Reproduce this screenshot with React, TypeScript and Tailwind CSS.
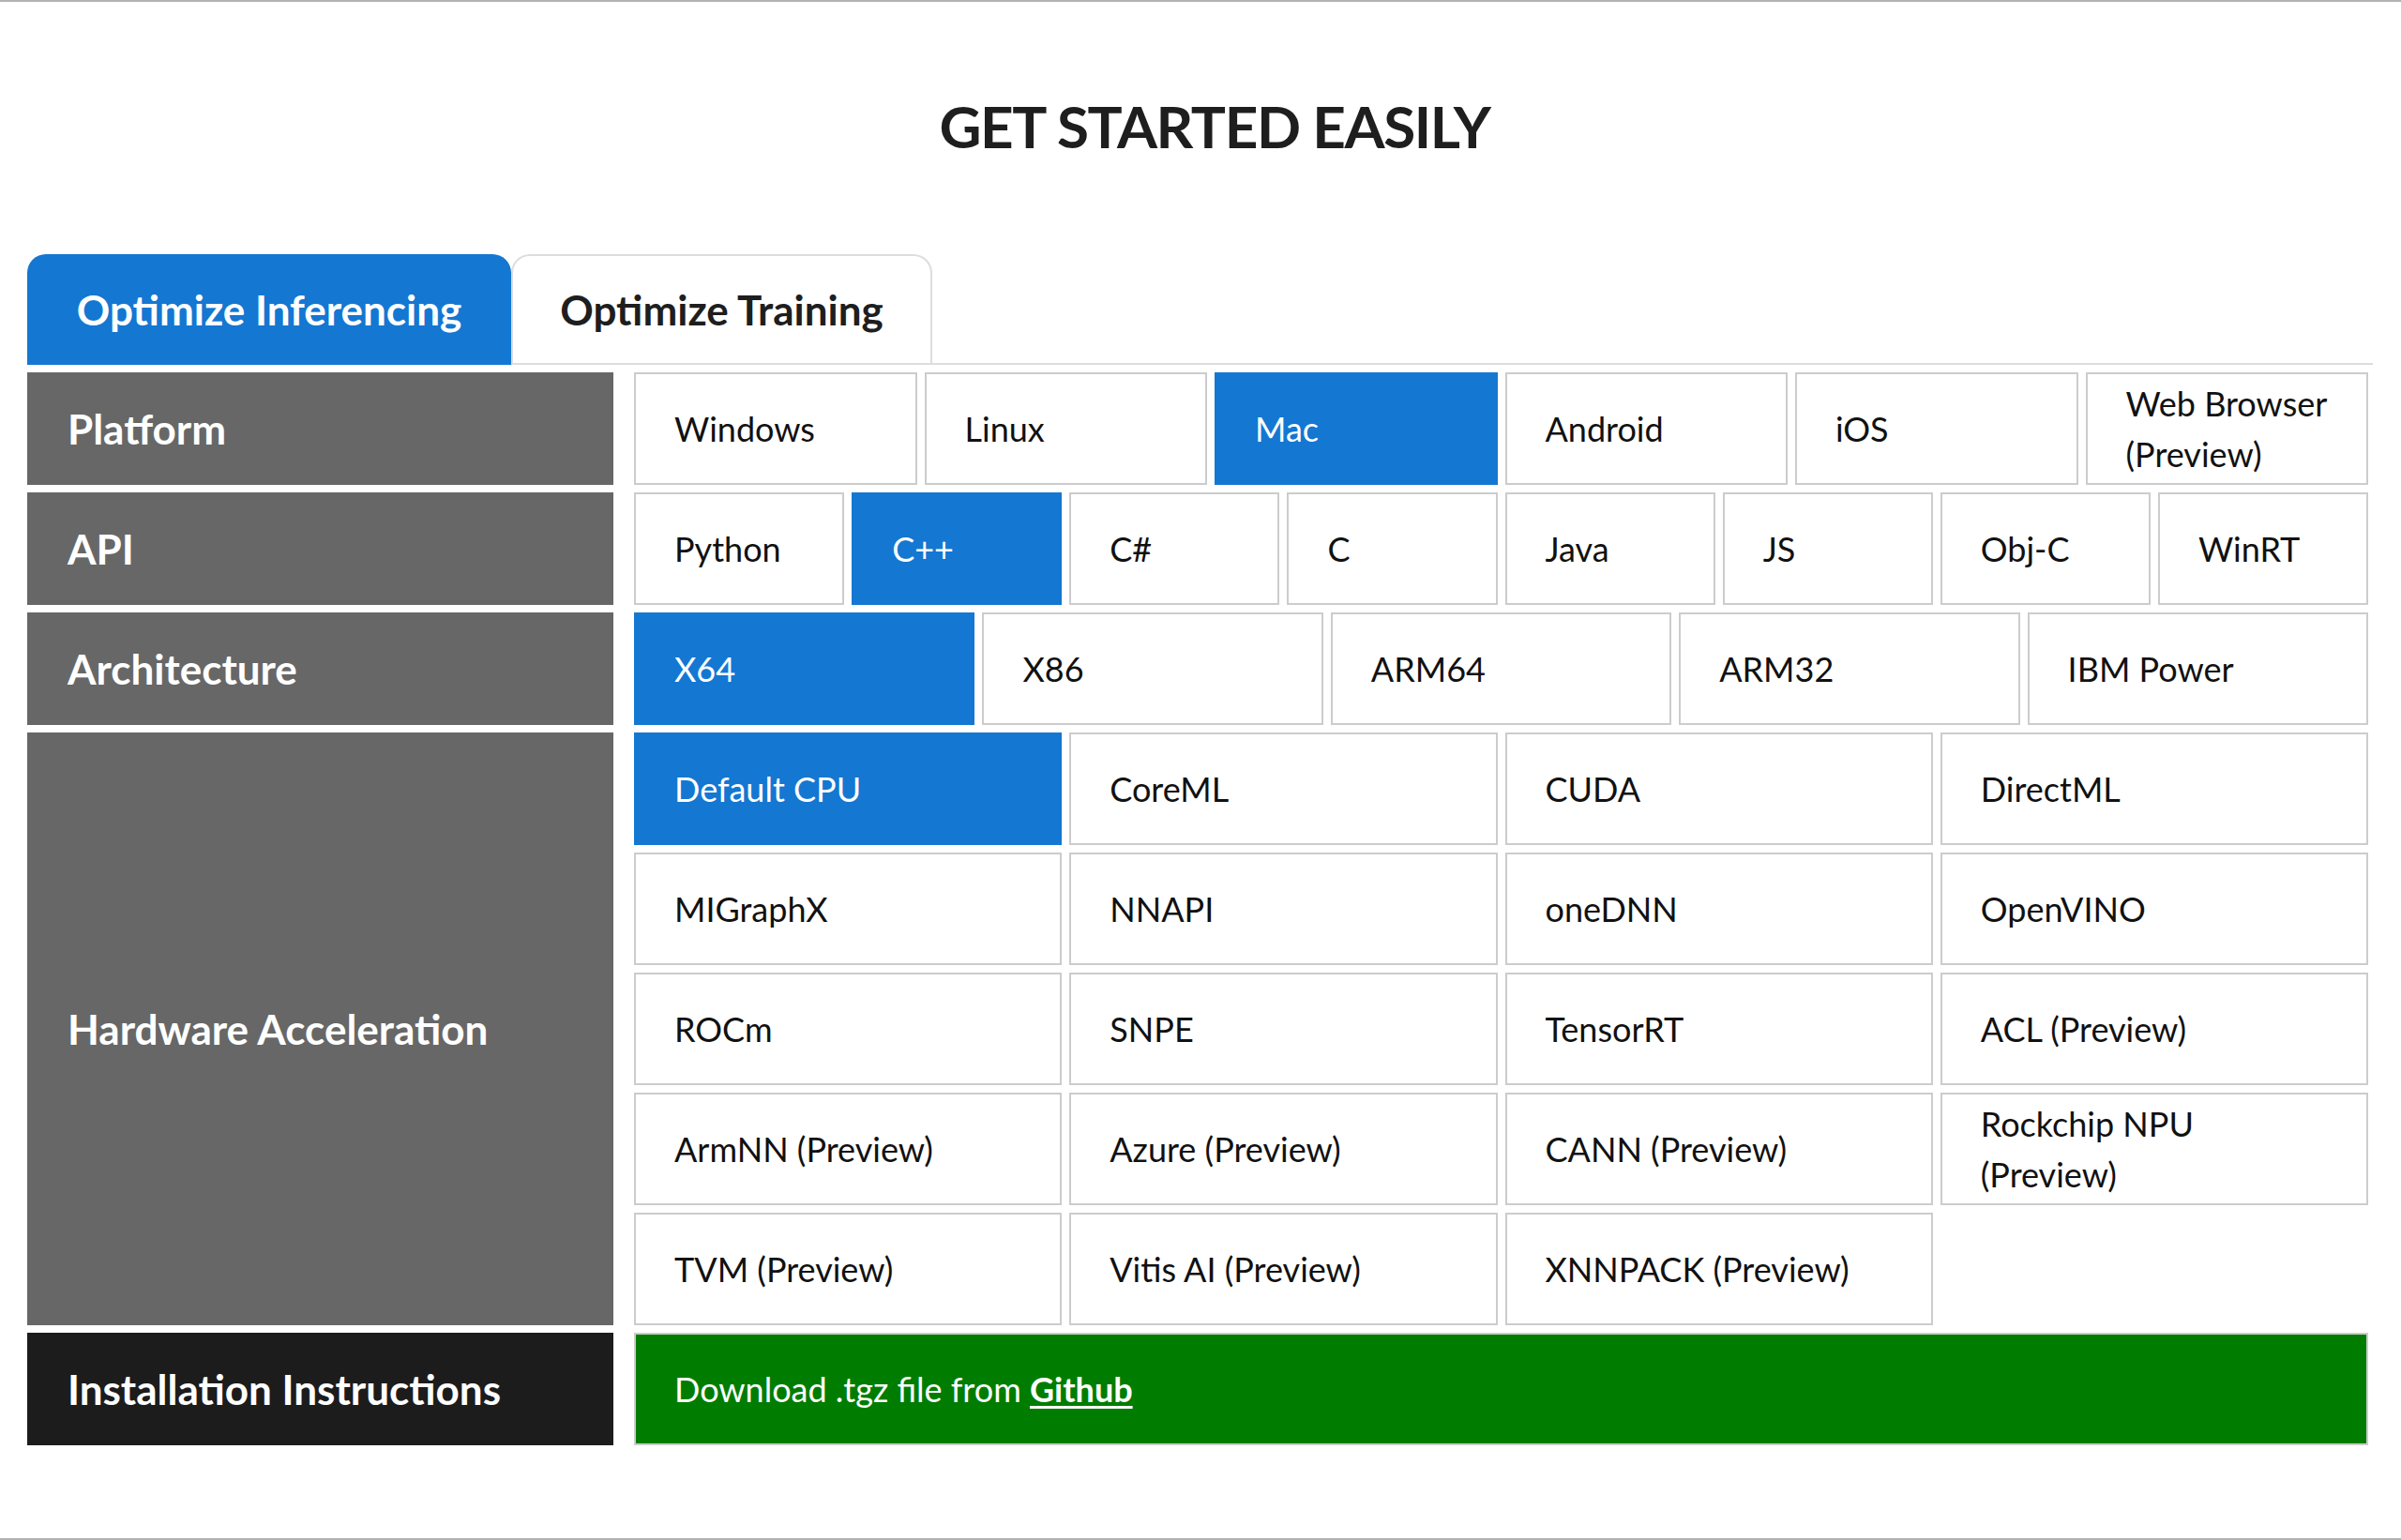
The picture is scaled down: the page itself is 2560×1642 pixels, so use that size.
import React from 'react';

type Opt = { label: string; active?: boolean };

const platforms: Opt[] = [
  { label: 'Windows' },
  { label: 'Linux' },
  { label: 'Mac', active: true },
  { label: 'Android' },
  { label: 'iOS' },
  { label: 'Web Browser\n(Preview)' },
];

const apis: Opt[] = [
  { label: 'Python' },
  { label: 'C++', active: true },
  { label: 'C#' },
  { label: 'C' },
  { label: 'Java' },
  { label: 'JS' },
  { label: 'Obj-C' },
  { label: 'WinRT' },
];

const archs: Opt[] = [
  { label: 'X64', active: true },
  { label: 'X86' },
  { label: 'ARM64' },
  { label: 'ARM32' },
  { label: 'IBM Power' },
];

const hardware: Opt[][] = [
  [{ label: 'Default CPU', active: true }, { label: 'CoreML' }, { label: 'CUDA' }, { label: 'DirectML' }],
  [{ label: 'MIGraphX' }, { label: 'NNAPI' }, { label: 'oneDNN' }, { label: 'OpenVINO' }],
  [{ label: 'ROCm' }, { label: 'SNPE' }, { label: 'TensorRT' }, { label: 'ACL (Preview)' }],
  [{ label: 'ArmNN (Preview)' }, { label: 'Azure (Preview)' }, { label: 'CANN (Preview)' }, { label: 'Rockchip NPU\n(Preview)' }],
  [{ label: 'TVM (Preview)' }, { label: 'Vitis AI (Preview)' }, { label: 'XNNPACK (Preview)' }],
];

function Cell({ opt }: { opt: Opt }) {
  return (
    <div
      className={cn(
        'h-[120px] border-2 pl-[41px] pr-4 flex items-center text-[36px] leading-[1.5] whitespace-pre-line',
        opt.active ? 'bg-[#1477d2] border-[#1477d2] text-white' : 'bg-white border-[#cccccc] text-[#111]'
      )}
    >
      {opt.label}
    </div>
  );
}

function Label({ children, className }: { children: React.ReactNode; className?: string }) {
  return (
    <div className={cn('w-[625px] shrink-0 flex items-center pl-[43px] text-[44px] font-bold text-white', className || 'bg-[#676767]')}>
      {children}
    </div>
  );
}

function OptRow({ items, cols }: { items: Opt[]; cols: string }) {
  return (
    <div className={cn('grid gap-[8px] w-[1849px]', cols)}>
      {items.map((o) => (
        <Cell key={o.label} opt={o} />
      ))}
    </div>
  );
}

export default function App() {
  return (
    <div className="h-[1642px] bg-white border-t-2 border-b-2 border-[#b3b3b3] font-['Lato','Liberation_Sans',sans-serif]">
      <h1 className="pt-[101px] pl-[30px] text-center text-[62px] leading-none font-bold tracking-[-1.4px] text-[#1e1e1e]">GET STARTED EASILY</h1>

      <div className="mt-[106px] mx-[29px] w-[2501px]">
        {/* Tabs */}
        <div className="flex border-b-2 border-[#dddddd]">
          <div className="w-[516px] h-[118px] -mb-[2px] rounded-t-[20px] bg-[#1477d2] flex items-center justify-center text-[44px] font-bold text-white">
            Optimize Inferencing
          </div>
          <div className="w-[449px] h-[116px] rounded-t-[20px] border-2 border-b-0 border-[#dddddd] flex items-center justify-center text-[44px] font-bold text-[#1e1e1e]">
            Optimize Training
          </div>
        </div>

        <div className="mt-[8px] flex flex-col gap-[8px]">
          <div className="flex gap-[22px] h-[120px]">
            <Label>Platform</Label>
            <OptRow items={platforms} cols="grid-cols-6" />
          </div>
          <div className="flex gap-[22px] h-[120px]">
            <Label>API</Label>
            <OptRow items={apis} cols="grid-cols-8" />
          </div>
          <div className="flex gap-[22px] h-[120px]">
            <Label>Architecture</Label>
            <OptRow items={archs} cols="grid-cols-5" />
          </div>
          <div className="flex gap-[22px]">
            <Label>Hardware Acceleration</Label>
            <div className="flex flex-col gap-[8px]">
              {hardware.map((row, i) => (
                <OptRow key={i} items={row} cols="grid-cols-4" />
              ))}
            </div>
          </div>
          <div className="flex gap-[22px] h-[120px]">
            <Label className="bg-[#1c1c1c]">Installation Instructions</Label>
            <div className="w-[1849px] border-2 border-[#cccccc] bg-[#007d00] pl-[41px] flex items-center text-[36px] text-white">
              Download .tgz file from&nbsp;<span className="font-bold underline underline-offset-4">Github</span>
            </div>
          </div>
        </div>
      </div>
    </div>
  );
}

function cn(...inputs: any[]) {
  return inputs.filter(Boolean).join(' ');
}
